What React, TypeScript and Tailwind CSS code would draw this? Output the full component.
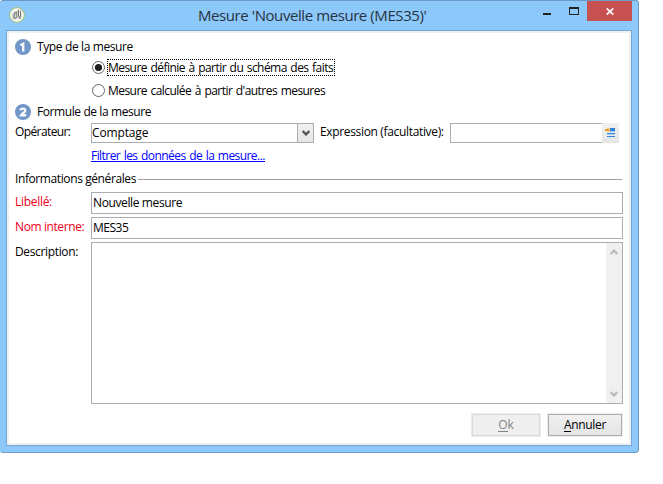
import type { ReactNode } from "react";

function StepBadge({ value }: { value: 1 | 2 }) {
  return (
    <span className="flex h-4 w-4 shrink-0 items-center justify-center rounded-full bg-[#7396c8]">
      <svg width="16" height="16" viewBox="0 0 16 16" fill="none" stroke="#f8fafd" strokeWidth="2.4">
        {value === 1 ? (
          <path d="M5.4 6.3 8.2 4.7V12.5" />
        ) : (
          <path d="M5.4 6.2C5.8 4.3 10.2 3.8 10.2 6.4C10.2 8.2 7.2 9.4 6.2 11.2H11.2" />
        )}
      </svg>
    </span>
  );
}

function AppIcon() {
  return (
    <svg width="16" height="16" viewBox="0 0 16 16">
      <circle cx="8" cy="8" r="7.4" fill="#f4f5f1" stroke="#9bbf6a" strokeWidth="1" />
      <path d="M3.4 7.4 5 5.4V12.4L3.4 11Z" fill="#b5b5b0" />
      <path d="M5 5.2 8.4 4V11L5 12.6Z" fill="#8f8f8a" />
      <path d="M6.6 6.5V10.5" stroke="#dededa" strokeWidth="1" />
      <path d="M9.5 2.8V9.2M11.6 3.6V9.6L8.8 10.2M10 11.8 12.2 10.4" stroke="#5c5c57" strokeWidth=".9" fill="none" />
    </svg>
  );
}

function Radio({ checked }: { checked?: boolean }) {
  return (
    <svg width="14" height="14" viewBox="0 0 14 14" className="shrink-0">
      <circle cx="6.5" cy="6.5" r="6" fill="#fff" stroke="#666" />
      {checked && <circle cx="6.5" cy="6.5" r="3.6" fill="#1d1d1d" />}
    </svg>
  );
}

function Chevron({ up, color }: { up?: boolean; color: string }) {
  return (
    <svg width="8" height="6" viewBox="0 0 8 6" fill="none" stroke={color} strokeWidth="2.4">
      <path d={up ? "M.6 5 4 1.6 7.4 5" : "M.6 1 4 4.4 7.4 1"} />
    </svg>
  );
}

function Field({ label, className, children }: { label: string; className: string; children: ReactNode }) {
  return (
    <div className="flex">
      <div className={`w-[76px] shrink-0 pt-0.5 ${className}`}>{label}</div>
      {children}
    </div>
  );
}

function TitleBar() {
  return (
    <div className="flex h-[29px] items-start pl-[9px] pr-1.5">
      <div className="pt-1.5"><AppIcon /></div>
      <h1 className="ml-[173px] w-[240px] pt-1 text-[15px] leading-[20px] tracking-[-0.42px] text-[#26333f]">
        Mesure 'Nouvelle mesure (MES35)'
      </h1>
      <div className="ml-auto flex">
        <svg width="44" height="20" viewBox="0 0 44 20" shapeRendering="crispEdges">
          <rect x="0" y="12" width="8" height="2" fill="#222" />
          <path d="M26.5 6.5h9v7h-9z" fill="none" stroke="#222" />
          <rect x="26" y="6" width="10" height="2" fill="#222" />
        </svg>
        <div className="flex h-5 w-[45px] items-center justify-center bg-[#c75050]">
          <svg width="8" height="7" viewBox="0 0 8 7" stroke="#fff" strokeWidth="1.7">
            <path d="M.7.4 7.3 6.6M7.3.4.7 6.6" />
          </svg>
        </div>
      </div>
    </div>
  );
}

export default function App() {
  return (
    <div className="h-[484px] w-[663px] bg-white font-['Open_Sans','Noto_Sans',sans-serif] text-[12px] leading-4 whitespace-nowrap text-black">
      <div className="h-[453px] w-[639px] rounded-[3px] rounded-br-[4px] border-t border-r border-b border-[#6b9bc4] bg-[#8dc8fa]">
        <TitleBar />
        <div className="ml-1.5 h-[416px] w-[626px] border border-[#75a7d5] bg-[#f0f0f0] p-0.5">
          <div className="h-[410px] bg-white pt-1.5 pl-1.5">
            <div className="flex h-4">
              <StepBadge value={1} />
              <span className="ml-1.5 tracking-[-0.38px]">Type de la mesure</span>
            </div>
            <div className="mt-1 ml-[77px] flex h-[17px]">
              <div className="pt-0.5"><Radio checked /></div>
              <div className="ml-px flex w-[228px] border border-dotted border-black leading-[15px] tracking-[-0.55px] [word-spacing:1px]">
                Mesure définie à partir du schéma des faits
              </div>
            </div>
            <div className="mt-1.5 ml-[77px] flex h-[17px]">
              <div className="pt-0.5"><Radio /></div>
              <span className="ml-0.5 leading-[17px] tracking-[-0.55px] [word-spacing:1px]">Mesure calculée à partir d'autres mesures</span>
            </div>
            <div className="mt-[5px] flex h-4">
              <StepBadge value={2} />
              <span className="ml-1.5 tracking-[-0.41px]">Formule de la mesure</span>
            </div>

            <div className="mt-[3px] flex h-5">
              <div className="w-[76px] pt-px tracking-[-0.6px]">Opérateur:</div>
              <div className="flex w-[223px] border border-[#abadb3]">
                <span className="flex-1 pt-px tracking-[-0.15px]">Comptage</span>
                <span className="flex w-4 items-center justify-center border-l border-[#abadb3] bg-linear-to-b from-[#f0f0f0] to-[#e5e5e5]">
                  <Chevron color="#555" />
                </span>
              </div>
              <div className="ml-[6px] w-[130px] pt-px tracking-[-0.34px]">Expression (facultative):</div>
              <div className="w-[152px] border border-r-0 border-[#abadb3]" />
              <div className="flex w-[17px] bg-linear-to-b from-[#f0f0f0] to-[#e5e5e5]">
                <svg width="17" height="20" viewBox="0 0 17 20" shapeRendering="crispEdges">
                  <rect x="7" y="5" width="6" height="3" fill="#2f84d6" />
                  <rect x="7" y="8" width="6" height="1" fill="#9cc5ec" />
                  <rect x="5" y="10" width="8" height="1" fill="#2f84d6" />
                  <rect x="5" y="11" width="8" height="1" fill="#b3d2ee" />
                  <rect x="5" y="13" width="8" height="1" fill="#2f84d6" />
                  <rect x="5" y="5" width="3" height="4" fill="#f5cf93" />
                  <rect x="3" y="6" width="4" height="2" fill="#f29a1c" />
                </svg>
              </div>
            </div>

            <div className="mt-[5px] ml-[76px] h-4">
              <a className="inline-block h-[14px] border-b border-[#0000ff] tracking-[-0.56px] text-[#0000ff] [word-spacing:1px]">
                Filtrer les données de la mesure...
              </a>
            </div>

            <div className="mt-[7px] flex h-4 items-center">
              <span className="w-[123px] tracking-[-0.4px]">Informations générales</span>
              <span className="h-px w-[484px] bg-[#a0a0a0]" />
            </div>

            <div className="mt-[5px] flex flex-col gap-[3px]">
              <Field label="Libellé:" className="tracking-[-0.3px] text-[#f00018]">
                <div className="h-[22px] w-[532px] border border-[#abadb3] pt-0.5 pl-px tracking-[-0.38px]">Nouvelle mesure</div>
              </Field>
              <Field label="Nom interne:" className="tracking-[-0.4px] text-[#f00018]">
                <div className="h-[22px] w-[532px] border border-[#abadb3] pt-0.5 pl-px tracking-[-0.5px] text-black">MES35</div>
              </Field>
              <Field label="Description:" className="tracking-[-0.35px]">
                <div className="flex h-[162px] w-[532px] justify-end border border-[#abadb3]">
                  <div className="flex w-4 flex-col items-center justify-between bg-[#f0f0f0] py-1.5">
                    <Chevron up color="#bdbdbd" />
                    <Chevron color="#bdbdbd" />
                  </div>
                </div>
              </Field>
            </div>

            <div className="mt-[9px] mr-1.5 flex h-6 justify-end gap-1.5">
              <button className="w-[70px] border border-[#ececec]">
                <span className="flex h-[22px] items-center justify-center border border-[#d9d9d9] bg-[#efefef] text-[#838383]">
                  <span className="h-[14px] border-b border-[#838383] leading-[14px]">O</span>
                  <span className="h-[14px] leading-[14px]">k</span>
                </span>
              </button>
              <button className="w-[76px] border border-[#ececec]">
                <span className="flex h-[22px] items-center justify-center border border-[#acacac] bg-linear-to-b from-[#f0f0f0] to-[#e4e4e4] tracking-[-0.3px]">
                  <span className="h-[14px] border-b border-black leading-[14px]">A</span>
                  <span className="h-[14px] leading-[14px]">nnuler</span>
                </span>
              </button>
            </div>
          </div>
        </div>
      </div>
    </div>
  );
}
